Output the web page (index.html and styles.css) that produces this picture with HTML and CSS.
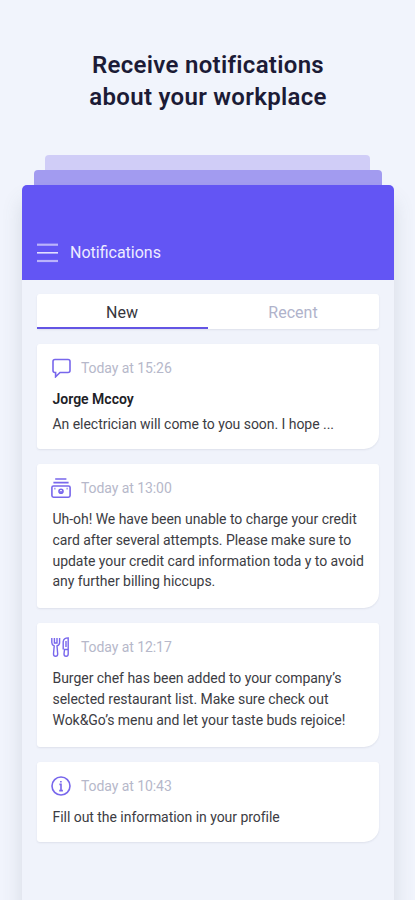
FILE: index.html
```html
<!DOCTYPE html>
<html lang="en">
<head>
<meta charset="utf-8">
<title>Notifications</title>
<link rel="stylesheet" href="styles.css">
</head>
<body>
<h1 class="headline">Receive notifications<br>about your workplace</h1>
<div class="stack">
  <div class="layer layer-back"></div>
  <div class="layer layer-mid"></div>
  <main class="phone">
    <header class="topbar">
      <svg class="menu" viewBox="0 0 21 20"><path class="dim" d="M0 1.7H21"/><path d="M0 9.8H21"/><path class="dim" d="M0 18H21"/></svg>
      <span class="title">Notifications</span>
    </header>
    <div class="content">
      <nav class="tabs">
        <div class="tab active">New</div>
        <div class="tab">Recent</div>
      </nav>
      <article class="card message">
        <div class="meta">
          <svg class="icon" viewBox="0 0 20 20"><path d="M4 1.5H17Q19 1.5 19 3.5V12.5Q19 14.5 17 14.5H9L4.6 18.8V14.5H4Q2 14.5 2 12.5V3.5Q2 1.5 4 1.5Z"/></svg>
          <time>Today at 15:26</time>
        </div>
        <h2 class="name">Jorge Mccoy</h2>
        <p class="text">An electrician will come to you soon. I hope ...</p>
      </article>
      <article class="card billing">
        <div class="meta">
          <svg class="icon" viewBox="0 0 20 20"><path d="M4.2 1H15.4M2.4 4.6H17.6"/><rect x=".9" y="8" width="18.2" height="11.2" rx="1.6"/><circle cx="10" cy="13.2" r="2"/><path d="M10 13V16M3.4 10.6H4.4M15.6 10.6H16.6"/></svg>
          <time>Today at 13:00</time>
        </div>
        <p class="text">Uh-oh! We have been unable to charge your credit<br>card after several attempts. Please make sure to<br>update your credit card information toda y to avoid<br>any further billing hiccups.</p>
      </article>
      <article class="card restaurant">
        <div class="meta">
          <svg class="icon thin" viewBox="0 0 20 20"><path d="M.8 1V5.5Q.8 8 3.2 9L2.5 17Q2.5 19.2 4.6 19.2T6.7 17L6 9Q8.6 8 8.6 5.5V1M3.4 1V6H6V1M12.2 12.5V4.5Q12.8 .9 17.2 .9V17Q17.2 19.2 15.1 19.2T13 17L13.5 12.5H17M15 4V10"/></svg>
          <time>Today at 12:17</time>
        </div>
        <p class="text">Burger chef has been added to your company’s<br>selected restaurant list. Make sure check out<br>Wok&amp;Go’s menu and let your taste buds rejoice!</p>
      </article>
      <article class="card profile">
        <div class="meta">
          <svg class="icon" viewBox="0 0 20 20"><circle cx="10" cy="10" r="9"/><path d="M8.4 8.4H10V14.6M8.2 14.6H11.9M9.9 4.9V6.5"/></svg>
          <time>Today at 10:43</time>
        </div>
        <p class="text">Fill out the information in your profile</p>
      </article>
    </div>
  </main>
</div>
</body>
</html>
```

FILE: styles.css
```css
* { box-sizing: border-box; }
html { height: 100%; overflow: hidden; }
body {
  margin: 0;
  height: 900px;
  overflow: hidden;
  background: #f1f4fc;
  font-family: Roboto, sans-serif;
  color: #3c3c43;
}
h1, h2, p { margin: 0; white-space: nowrap; }
.headline {
  height: 155px;
  padding: 49px 0 0 1px;
  text-align: center;
  font-size: 24px;
  line-height: 32px;
  font-weight: 600;
  letter-spacing: .3px;
  color: #1c1b36;
}
.stack { display: flex; flex-direction: column; }
.layer { height: 15px; border-radius: 4px 4px 0 0; }
.layer-back { margin: 0 45px; background: #d0cdf7; }
.layer-mid { margin: 0 33px 0 34px; background: #a29bf0; }
.phone {
  width: 372px;
  height: 760px;
  margin-left: 22px;
  background: #f0f3fb;
  border-radius: 5px 5px 0 0;
  box-shadow: 0 16px 20px rgba(80, 95, 105, .17);
}
.topbar {
  height: 95px;
  padding: 41px 0 0 15px;
  display: flex;
  align-items: center;
  gap: 12px;
  background: #6355f4;
  border-radius: 5px 5px 0 0;
  color: #eeecff;
}
.menu { width: 21px; height: 20px; fill: none; stroke: #e2dfff; stroke-width: 1.6; }
.menu .dim { stroke: #bbb3fb; stroke-width: 2.2; }
.title { font-size: 16px; line-height: 20px; }
.content { padding: 14px 15px; }
.tabs {
  display: grid;
  grid-template-columns: 1fr 1fr;
  grid-template-rows: 35px;
  height: 35px;
  margin-bottom: 15px;
  background: #fff;
  border-radius: 3px;
  box-shadow: 0 1px 2px rgba(60, 70, 100, .1);
}
.tab {
  height: 35px;
  padding-right: 1px;
  text-align: center;
  font-size: 16px;
  line-height: 37px;
  color: #b0b3cb;
}
.tab.active { color: #36363c; border-bottom: 2px solid #6355e4; }
.card {
  padding: 14px 15px 0;
  background: #fff;
  border-radius: 3px 3px 15px 3px;
  box-shadow: 0 1px 2px rgba(60, 70, 100, .1);
}
.message { height: 105px; margin-bottom: 15px; }
.billing { height: 144px; margin-bottom: 14.5px; }
.restaurant { height: 124.5px; margin-bottom: 14.5px; padding-top: 14.5px; }
.profile { height: 80.5px; padding-top: 14.5px; }
.meta { display: flex; align-items: center; gap: 10px; height: 20px; margin-left: -1px; }
.icon { width: 20px; height: 20px; fill: none; stroke: #7867ec; stroke-width: 1.6; }
.thin { stroke-width: 1.4; }
time { font-size: 14px; line-height: 20px; letter-spacing: -.07px; color: #b6b8ca; }
.name { font-size: 14px; line-height: 21px; margin: 11px 0 0 .5px; font-weight: 600; color: #202026; }
.text { font-size: 14px; line-height: 20.8px; margin: 11px 0 0 .5px; letter-spacing: -.04px; }
.name + .text { margin-top: 4px; }
```
